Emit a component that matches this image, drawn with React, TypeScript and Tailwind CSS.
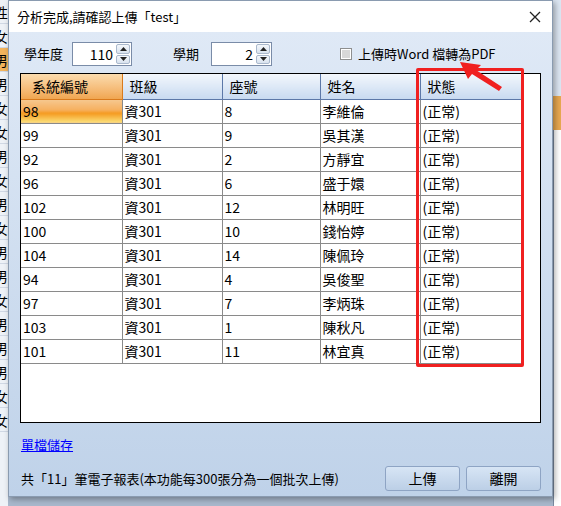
import React from 'react';

const rows = [
  ['98', '資301', '8', '李維倫'],
  ['99', '資301', '9', '吳其漢'],
  ['92', '資301', '2', '方靜宜'],
  ['96', '資301', '6', '盛于嬛'],
  ['102', '資301', '12', '林明旺'],
  ['100', '資301', '10', '錢怡婷'],
  ['104', '資301', '14', '陳佩玲'],
  ['94', '資301', '4', '吳俊聖'],
  ['97', '資301', '7', '李炳珠'],
  ['103', '資301', '1', '陳秋凡'],
  ['101', '資301', '11', '林宜真'],
];

const widths = ['w-[101px]', 'w-[100px]', 'w-[98px]', 'w-[100px]', 'w-[101px]'];
const headers = ['系統編號', '班級', '座號', '姓名', '狀態'];
const sideChars = ['性', '女', '男', '男', '女', '女', '男', '女', '男', '女', '男', '男', '女', '男', '男', '男', '女', '女'];

function Spinner({ value, width }: { value: string; width: string }) {
  return (
    <div className={`flex h-[24px] ${width} border border-[#7a8ca8] bg-white`}>
      <div className="flex-1 pr-[2px] text-right text-[14px] leading-[22px] text-black">{value}</div>
      <div className="flex w-[16px] flex-col gap-[1px] p-[1px]">
        <div className="flex flex-1 items-center justify-center rounded-[2px] border border-[#a9b8cc] bg-gradient-to-b from-[#f4f7fb] to-[#d8e2ee]">
          <svg width="7" height="4" viewBox="0 0 7 4"><polygon points="3.5,0 7,4 0,4" fill="#222" /></svg>
        </div>
        <div className="flex flex-1 items-center justify-center rounded-[2px] border border-[#a9b8cc] bg-gradient-to-b from-[#f4f7fb] to-[#d8e2ee]">
          <svg width="7" height="4" viewBox="0 0 7 4"><polygon points="0,0 7,0 3.5,4" fill="#222" /></svg>
        </div>
      </div>
    </div>
  );
}

export default function App() {
  return (
    <div
      className="flex h-[506px] w-[561px] overflow-hidden bg-[#c9d6e6] text-black"
      style={{ fontFamily: '"Noto Sans CJK TC", "Noto Sans", sans-serif' }}
    >
      {/* background window strip on the left */}
      <div className="flex w-[8px] flex-col overflow-hidden bg-[#eef2f7]">
        {sideChars.map((c, i) => (
          <div
            key={i}
            className={`h-[24px] shrink-0 border-b border-[#d0d8e4] text-[14px] leading-[24px] -ml-[6px] ${i === 2 ? 'bg-[#f2b45c]' : ''}`}
          >
            {c}
          </div>
        ))}
      </div>

      <div className="flex flex-col">
        {/* dialog */}
        <div className="relative flex h-[497px] w-[545px] flex-col border border-[#8a9bb0] shadow-[2px_2px_6px_rgba(0,0,0,0.35)]">
          <div className="flex h-[31px] items-center justify-between bg-white pl-[8px] pr-[8px]">
            <span className="text-[13px]">分析完成,請確認上傳「test」</span>
            <svg width="12" height="12" viewBox="0 0 12 12" className="mr-[3px]">
              <path d="M1 1 L11 11 M11 1 L1 11" stroke="#222" strokeWidth="1.3" />
            </svg>
          </div>

          <div className="flex flex-1 flex-col bg-gradient-to-b from-[#dfe9f6] to-[#bfd2e9] px-[11px]">
            <div className="flex h-[38px] items-end pb-[4px]">
              <span className="w-[52px] pl-[4px] text-[13px] leading-[24px]">學年度</span>
              <Spinner value="110" width="w-[60px]" />
              <span className="ml-[41px] w-[38px] text-[13px] leading-[24px]">學期</span>
              <Spinner value="2" width="w-[61px]" />
              <div className="ml-[68px] flex items-center gap-[6px]">
                <div className="flex h-[12px] w-[12px] items-center justify-center border border-[#8e8f8f] bg-white">
                  <div className="h-[8px] w-[8px] bg-[#d8d8d8]" />
                </div>
                <span className="text-[13px] leading-[24px]">上傳時Word 檔轉為PDF</span>
              </div>
            </div>

            <div className="mt-[3px] flex h-[350px] w-[521px] flex-col border border-black bg-white">
              <table className="w-[500px] table-fixed border-collapse text-[14px]">
                <thead>
                  <tr className="h-[25px]">
                    {headers.map((h, i) => (
                      <th
                        key={h}
                        className={`${widths[i]} border-b border-r border-[#5c78a8] text-left font-normal ${
                          i === 0
                            ? 'border-[#d97a1c] bg-gradient-to-b from-[#fbdcae] to-[#f0a650] pl-[11px]'
                            : 'bg-gradient-to-b from-[#f3f7fc] to-[#c8daf0] pl-[7px]'
                        }`}
                      >
                        {h}
                      </th>
                    ))}
                  </tr>
                </thead>
                <tbody>
                  {rows.map((r, ri) => (
                    <tr key={ri} className="h-[24px]">
                      {[...r, '(正常)'].map((c, ci) => (
                        <td
                          key={ci}
                          className={`border-b border-r border-[#8a8a8a] px-[2px] leading-[23px] ${
                            ri === 0 && ci === 0
                              ? 'bg-[linear-gradient(to_bottom,#f6c890_0%,#f6b060_45%,#f59a20_60%,#fbe07a_100%)]'
                              : ''
                          }`}
                        >
                          {c}
                        </td>
                      ))}
                    </tr>
                  ))}
                </tbody>
              </table>
            </div>

            <div className="mt-[8px] h-[24px] pl-[1px]">
              <span className="text-[13px] leading-[24px] text-[#0000ff] underline">單檔儲存</span>
            </div>

            <div className="mt-[11px] flex items-center">
              <span className="flex-1 pl-[1px] text-[13px]">共「11」筆電子報表(本功能每300張分為一個批次上傳)</span>
              <button className="h-[25px] w-[75px] rounded-[3px] border border-[#8ea4c4] bg-gradient-to-b from-[#d7e5f5] to-[#bccfe6] text-[14px]">
                上傳
              </button>
              <button className="ml-[6px] h-[25px] w-[75px] rounded-[3px] border border-[#8ea4c4] bg-gradient-to-b from-[#d7e5f5] to-[#bccfe6] text-[14px]">
                離開
              </button>
            </div>
          </div>

          {/* annotation: red box and arrow */}
          <div className="pointer-events-none absolute left-[407px] top-[67px] h-[299px] w-[108px] rounded-[2px] border-[3px] border-[#f02020]" />
          <svg className="pointer-events-none absolute left-[440px] top-[54px]" width="60" height="40" viewBox="0 0 60 40">
            <polygon points="11,7 32,10 27,15 53,32 50,36 23,19 19,24" fill="#f02020" />
          </svg>
        </div>
        <div className="flex-1 bg-[#a8b8cc]" />
      </div>

      {/* background window strip on the right */}
      <div className="flex w-[8px] flex-col bg-[#dce6f2]">
        <div className="h-[96px]" />
        <div className="h-[34px] bg-[#e8a850]" />
        <div className="flex-1 border-l border-[#7a8aa0] bg-white" />
      </div>
    </div>
  );
}
